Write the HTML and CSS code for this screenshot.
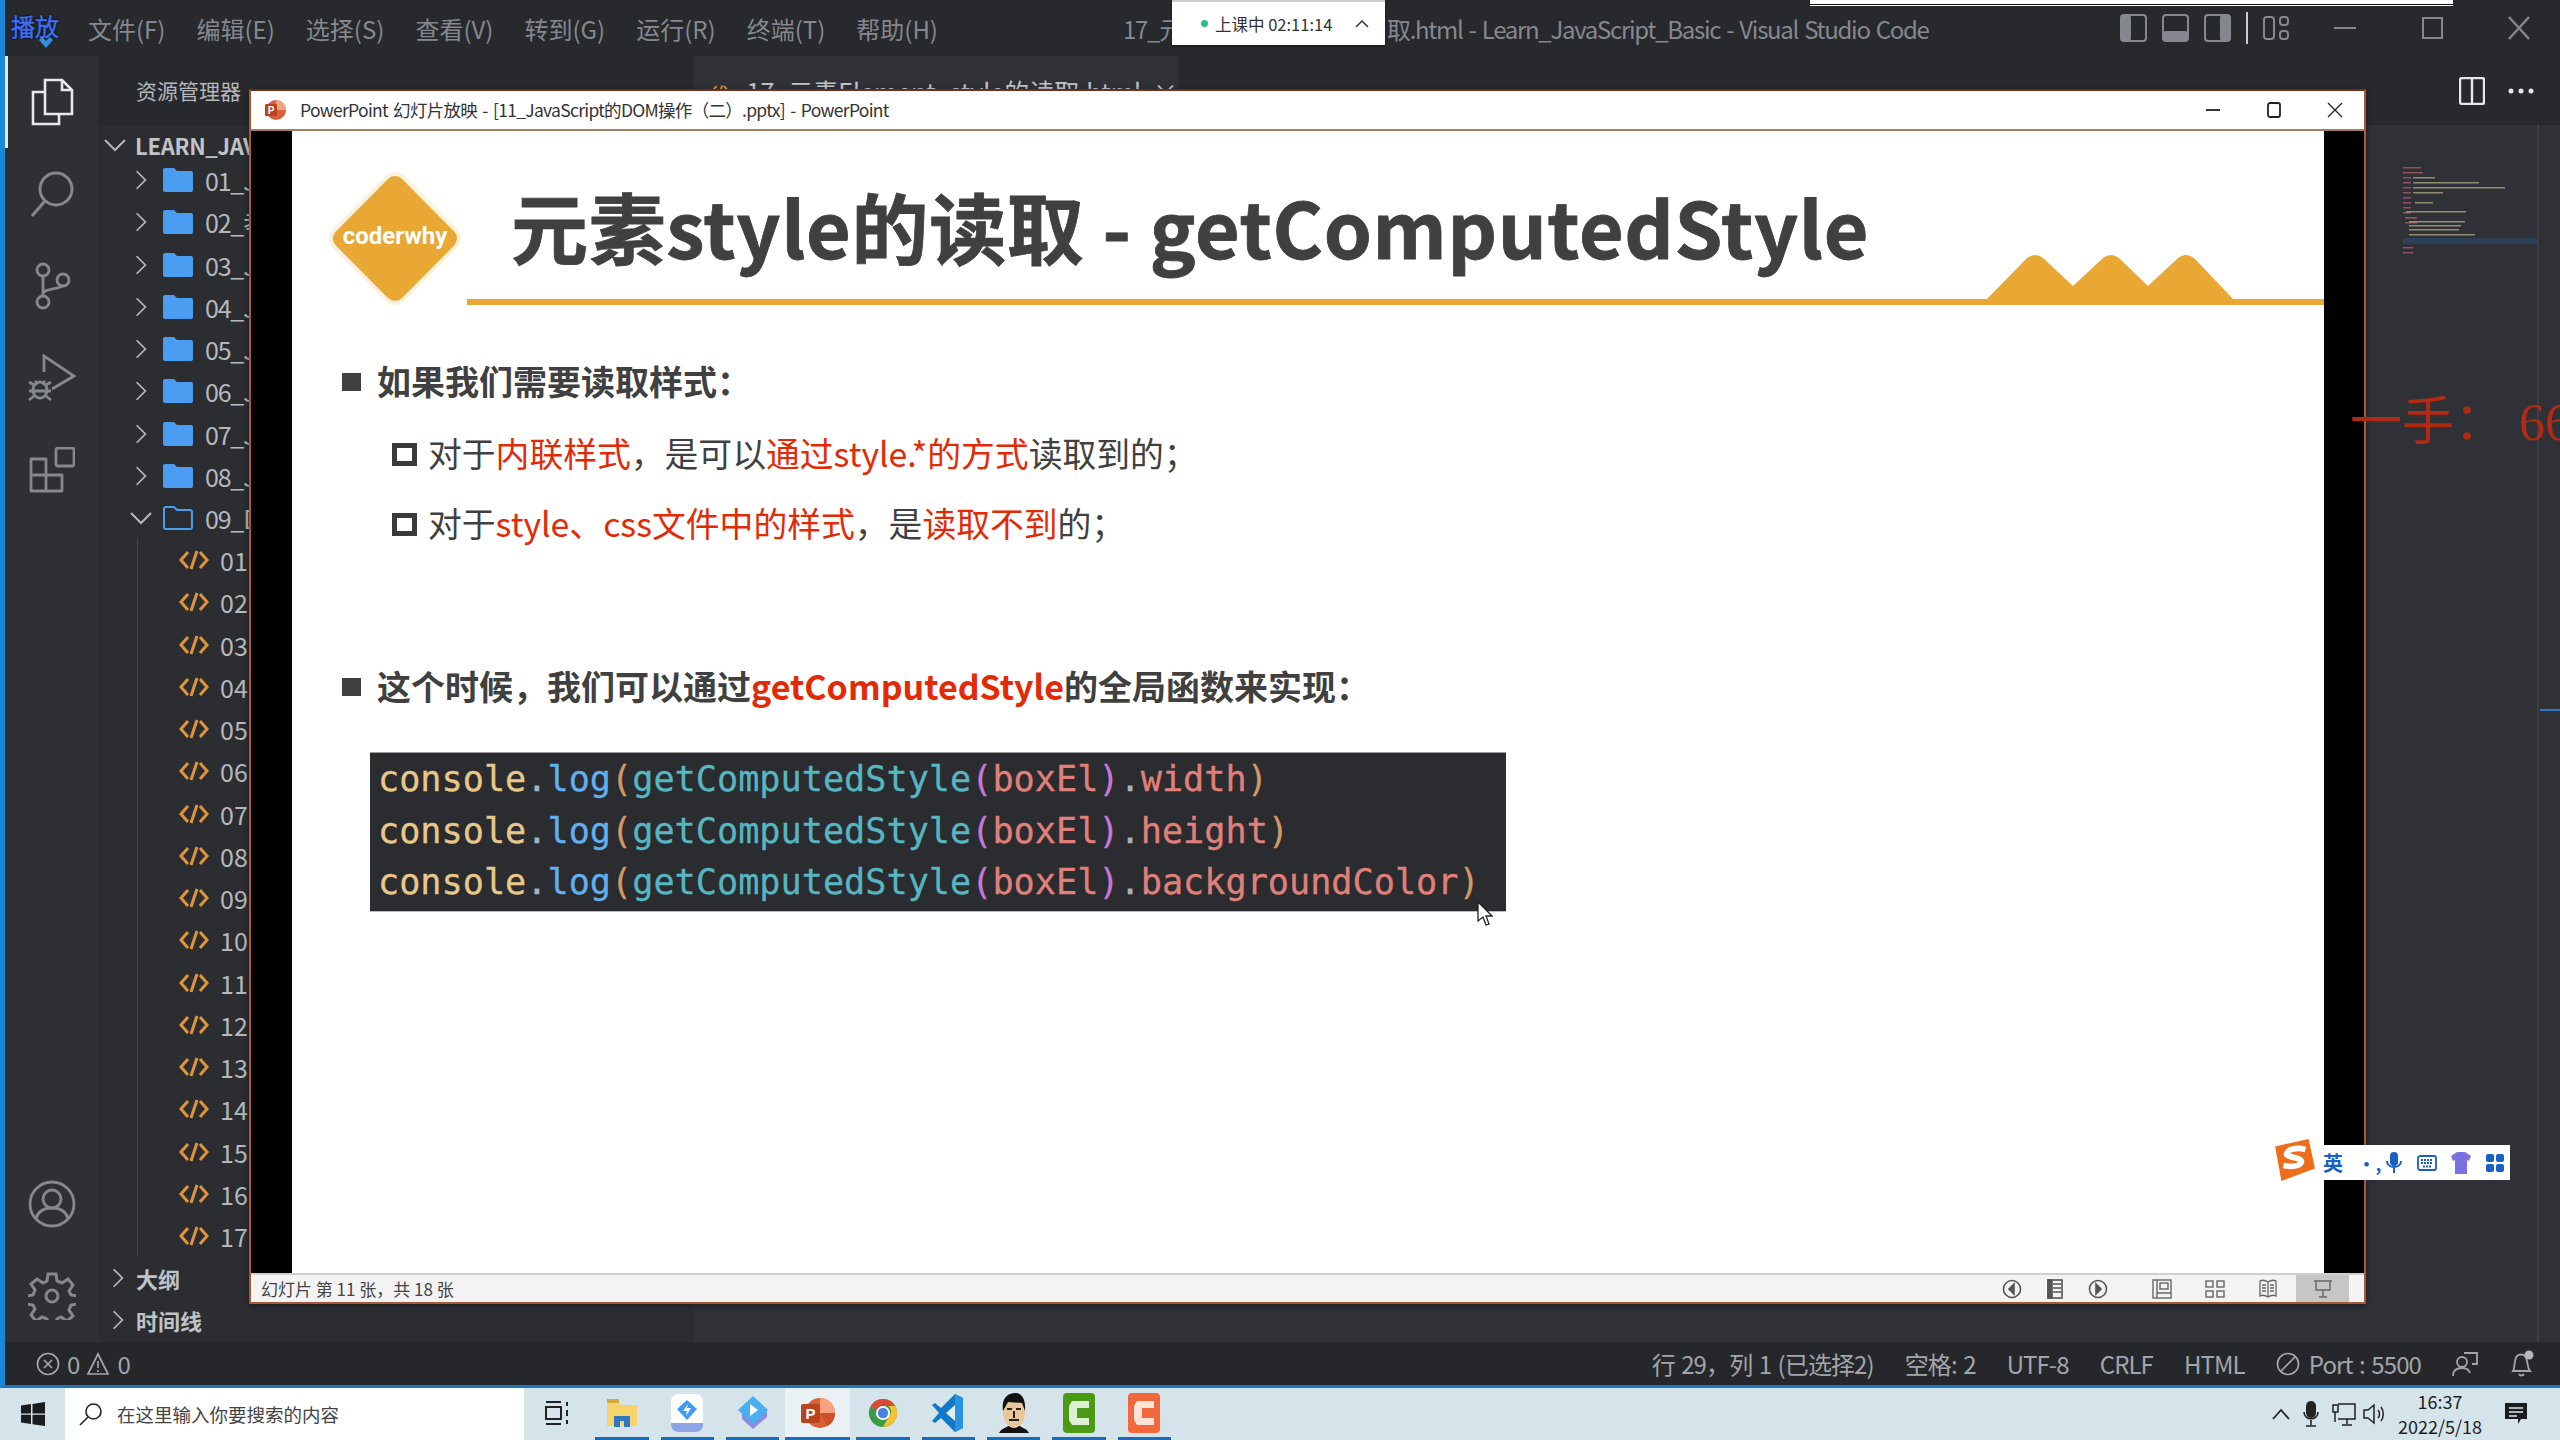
FILE: index.html
```html
<!DOCTYPE html>
<html lang="en">
<head>
  <meta charset="UTF-8" />
  <title>17_元素Element.style的读取.html - Learn_JavaScript_Basic - Visual Studio Code</title>
  <link rel="stylesheet" href="styles.css">
</head>
<body>
  <!-- shared icons -->
  <svg class="defs" width="0" height="0">
    <symbol id="chev-r" viewBox="0 0 16 24"><path d="M3 2l10 10L3 22" fill="none" stroke="currentColor" stroke-width="2"/></symbol>
    <symbol id="chev-d" viewBox="0 0 24 16"><path d="M2 3l10 10L22 3" fill="none" stroke="currentColor" stroke-width="2"/></symbol>
    <symbol id="folder" viewBox="0 0 32 26"><path d="M1 3a2 2 0 0 1 2-2h9l3 3h14a2 2 0 0 1 2 2v17a2 2 0 0 1-2 2H3a2 2 0 0 1-2-2z" fill="#4a9df0"/></symbol>
    <symbol id="folder-open" viewBox="0 0 32 26"><path d="M2 4a2 2 0 0 1 2-2h8l3 3h13a2 2 0 0 1 2 2v15a2 2 0 0 1-2 2H4a2 2 0 0 1-2-2z" fill="none" stroke="#4a9df0" stroke-width="2"/></symbol>
    <symbol id="html" viewBox="0 0 30 22"><path d="M9 3L2 11l7 8M21 3l7 8-7 8M18 2l-6 18" fill="none" stroke="#e0953a" stroke-width="3"/></symbol>
  </svg>

  <div class="desktop">
    <div class="vscode">
      <header class="titlebar">
        <span class="brand">播放<svg width="16" height="14" viewBox="0 0 16 14"><path d="M1 4l7 8 7-8-3-3-4 4-4-4z" fill="#2f8fe0"/></svg></span>
        <nav class="menu">
          <span>文件(F)</span><span>编辑(E)</span><span>选择(S)</span><span>查看(V)</span><span>转到(G)</span><span>运行(R)</span><span>终端(T)</span><span>帮助(H)</span>
        </nav>
        <div class="win-title"><span class="wt-a">17_元</span><span>取.html - Learn_JavaScript_Basic - Visual Studio Code</span></div>
        <div class="layout-btns">
          <svg width="27" height="28" viewBox="0 0 27 28"><rect x="1" y="1" width="25" height="26" rx="3" fill="none" stroke="#85888e" stroke-width="2"/><rect x="1" y="1" width="10" height="26" rx="3" fill="#85888e"/></svg>
          <svg width="27" height="28" viewBox="0 0 27 28"><rect x="1" y="1" width="25" height="26" rx="3" fill="none" stroke="#85888e" stroke-width="2"/><rect x="1" y="17" width="25" height="10" rx="3" fill="#85888e"/></svg>
          <svg width="27" height="28" viewBox="0 0 27 28"><rect x="1" y="1" width="25" height="26" rx="3" fill="none" stroke="#85888e" stroke-width="2"/><rect x="16" y="1" width="10" height="26" rx="3" fill="#85888e"/></svg>
          <span class="sep"></span>
          <svg width="26" height="24" viewBox="0 0 26 24"><rect x="1" y="1" width="10" height="22" rx="3" fill="none" stroke="#85888e" stroke-width="2"/><rect x="17" y="1" width="8" height="8" rx="3" fill="none" stroke="#85888e" stroke-width="2"/><rect x="17" y="15" width="8" height="8" rx="3" fill="none" stroke="#85888e" stroke-width="2"/></svg>
        </div>
        <div class="win-btns">
          <svg width="30" height="30" viewBox="0 0 30 30"><path d="M4 15h22" stroke="#85888e" stroke-width="2"/></svg>
          <svg width="30" height="30" viewBox="0 0 30 30"><rect x="6" y="5" width="19" height="20" fill="none" stroke="#85888e" stroke-width="2"/></svg>
          <svg width="30" height="30" viewBox="0 0 30 30"><path d="M5 4l20 22M25 4L5 26" stroke="#85888e" stroke-width="2.4"/></svg>
        </div>
      </header>

      <div class="workbench">
        <aside class="activity">
          <div class="act act-on">
            <svg width="44" height="48" viewBox="0 0 44 48" fill="none" stroke="#e6e8ea" stroke-width="2.6"><path d="M15 2h17l10 10v24H15z"/><path d="M32 2v10h10"/><path d="M15 14H3v32h26V36"/></svg>
          </div>
          <div class="act">
            <svg width="46" height="48" viewBox="0 0 46 48" fill="none" stroke="#85888e" stroke-width="3"><circle cx="27" cy="19" r="16"/><path d="M16 31L3 46"/></svg>
          </div>
          <div class="act">
            <svg width="38" height="48" viewBox="0 0 38 48" fill="none" stroke="#85888e" stroke-width="2.8"><circle cx="10" cy="8" r="6"/><circle cx="10" cy="40" r="6"/><circle cx="30" cy="18" r="6"/><path d="M10 14v20M10 32c0-6 18-4 20-9"/></svg>
          </div>
          <div class="act">
            <svg width="48" height="48" viewBox="0 0 48 48" fill="none" stroke="#85888e" stroke-width="2.8"><path d="M16 18V2l30 20-22 13"/><ellipse cx="12" cy="36" rx="7" ry="8"/><path d="M1 28l5 3M1 46l5-4M23 28l-5 3M23 46l-5-4M1 37h22M7 27l3 3M17 27l-3 3"/></svg>
          </div>
          <div class="act">
            <svg width="46" height="46" viewBox="0 0 46 46" fill="none" stroke="#85888e" stroke-width="2.8"><path d="M2 12h15v16H2zM2 28h15v16H2zM17 28h16v16H17z" stroke-linejoin="round"/><rect x="27" y="1" width="18" height="18" rx="2"/></svg>
          </div>
          <div class="act act-bottom">
            <svg width="48" height="48" viewBox="0 0 48 48" fill="none" stroke="#85888e" stroke-width="2.8"><circle cx="24" cy="24" r="22"/><circle cx="24" cy="19" r="9"/><path d="M8 39c2-9 9-11 16-11s14 2 16 11"/></svg>
          </div>
          <div class="act">
            <svg width="48" height="48" viewBox="0 0 48 48" fill="none" stroke="#85888e" stroke-width="3"><circle cx="24" cy="24" r="6"/><path d="M20 2h8l1 7 5 2 6-4 5 6-4 6 2 4 7 1v8l-7 1-2 5 4 6-6 5-6-4-4 2-1 7h-8l-1-7-5-2-6 4-5-6 4-6-2-4-7-1v-8l7-1 2-5-4-6 6-5 6 4 4-2z"/></svg>
          </div>
        </aside>

        <aside class="sidebar">
          <div class="side-title">资源管理器</div>
          <div class="side-head"><svg class="tw-d" width="24" height="16"><use href="#chev-d"/></svg><b>LEARN_JAV</b></div>
          <div class="tree">
            <div class="row"><svg class="tw" width="14" height="24"><use href="#chev-r"/></svg><svg class="fi" width="32" height="26"><use href="#folder"/></svg><span>01_J</span></div>
            <div class="row"><svg class="tw" width="14" height="24"><use href="#chev-r"/></svg><svg class="fi" width="32" height="26"><use href="#folder"/></svg><span>02_孝</span></div>
            <div class="row"><svg class="tw" width="14" height="24"><use href="#chev-r"/></svg><svg class="fi" width="32" height="26"><use href="#folder"/></svg><span>03_J</span></div>
            <div class="row"><svg class="tw" width="14" height="24"><use href="#chev-r"/></svg><svg class="fi" width="32" height="26"><use href="#folder"/></svg><span>04_J</span></div>
            <div class="row"><svg class="tw" width="14" height="24"><use href="#chev-r"/></svg><svg class="fi" width="32" height="26"><use href="#folder"/></svg><span>05_J</span></div>
            <div class="row"><svg class="tw" width="14" height="24"><use href="#chev-r"/></svg><svg class="fi" width="32" height="26"><use href="#folder"/></svg><span>06_J</span></div>
            <div class="row"><svg class="tw" width="14" height="24"><use href="#chev-r"/></svg><svg class="fi" width="32" height="26"><use href="#folder"/></svg><span>07_J</span></div>
            <div class="row"><svg class="tw" width="14" height="24"><use href="#chev-r"/></svg><svg class="fi" width="32" height="26"><use href="#folder"/></svg><span>08_J</span></div>
            <div class="row"><svg class="tw tw-open" width="24" height="16"><use href="#chev-d"/></svg><svg class="fi" width="32" height="26"><use href="#folder-open"/></svg><span>09_D</span></div>
            <div class="row file"><svg class="hi" width="30" height="22"><use href="#html"/></svg><span>01</span></div>
            <div class="row file"><svg class="hi" width="30" height="22"><use href="#html"/></svg><span>02</span></div>
            <div class="row file"><svg class="hi" width="30" height="22"><use href="#html"/></svg><span>03</span></div>
            <div class="row file"><svg class="hi" width="30" height="22"><use href="#html"/></svg><span>04</span></div>
            <div class="row file"><svg class="hi" width="30" height="22"><use href="#html"/></svg><span>05</span></div>
            <div class="row file"><svg class="hi" width="30" height="22"><use href="#html"/></svg><span>06</span></div>
            <div class="row file"><svg class="hi" width="30" height="22"><use href="#html"/></svg><span>07</span></div>
            <div class="row file"><svg class="hi" width="30" height="22"><use href="#html"/></svg><span>08</span></div>
            <div class="row file"><svg class="hi" width="30" height="22"><use href="#html"/></svg><span>09</span></div>
            <div class="row file"><svg class="hi" width="30" height="22"><use href="#html"/></svg><span>10</span></div>
            <div class="row file"><svg class="hi" width="30" height="22"><use href="#html"/></svg><span>11</span></div>
            <div class="row file"><svg class="hi" width="30" height="22"><use href="#html"/></svg><span>12</span></div>
            <div class="row file"><svg class="hi" width="30" height="22"><use href="#html"/></svg><span>13</span></div>
            <div class="row file"><svg class="hi" width="30" height="22"><use href="#html"/></svg><span>14</span></div>
            <div class="row file"><svg class="hi" width="30" height="22"><use href="#html"/></svg><span>15</span></div>
            <div class="row file"><svg class="hi" width="30" height="22"><use href="#html"/></svg><span>16</span></div>
            <div class="row file row-on"><svg class="hi" width="30" height="22"><use href="#html"/></svg><span>17</span></div>
          </div>
          <div class="side-foot"><svg width="14" height="24"><use href="#chev-r"/></svg><b>大纲</b></div>
          <div class="side-foot"><svg width="14" height="24"><use href="#chev-r"/></svg><b>时间线</b></div>
        </aside>

        <main class="editor">
          <div class="tabs">
            <div class="tab"><svg width="30" height="22"><use href="#html"/></svg><span>17_元素Element_style的读取.html</span><i>×</i></div>
            <div class="tab-actions">
              <svg width="26" height="28" viewBox="0 0 26 28" fill="none" stroke="#e6e8ea" stroke-width="2.4"><rect x="1" y="1" width="24" height="26" rx="2"/><path d="M13 1v26"/></svg>
              <svg width="26" height="6" viewBox="0 0 26 6" fill="#e6e8ea"><circle cx="3" cy="3" r="2.5"/><circle cx="13" cy="3" r="2.5"/><circle cx="23" cy="3" r="2.5"/></svg>
            </div>
          </div>
          <div class="code-area">
            <svg class="minimap" width="157" height="1217" viewBox="0 0 157 1217">
              <rect x="0" y="113" width="134" height="6" fill="#2c4058"/>
              <g class="mm" fill="#b5636a">
                <rect x="0" y="42" width="18" height="1.5"/><rect x="0" y="47" width="20" height="1.5"/><rect x="0" y="52" width="8" height="1.5"/><rect x="0" y="57" width="8" height="1.5"/><rect x="0" y="62" width="8" height="1.5"/><rect x="0" y="67" width="8" height="1.5"/><rect x="0" y="72" width="8" height="1.5"/><rect x="0" y="77" width="8" height="1.5"/><rect x="0" y="82" width="8" height="1.5"/><rect x="0" y="87" width="8" height="1.5"/><rect x="2" y="92" width="12" height="1.5"/><rect x="2" y="97" width="12" height="1.5"/><rect x="0" y="122" width="10" height="1.5"/><rect x="0" y="127" width="10" height="1.5"/><rect x="3" y="92" width="10" height="1.5"/>
              </g>
              <g class="mm" fill="#b7b48a">
                <rect x="10" y="52" width="22" height="1.5"/><rect x="10" y="57" width="66" height="1.5"/><rect x="10" y="62" width="92" height="1.5"/><rect x="10" y="67" width="30" height="1.5"/><rect x="12" y="77" width="18" height="1.5"/><rect x="3" y="86" width="60" height="1.5"/><rect x="6" y="96" width="56" height="1.5"/><rect x="6" y="100" width="52" height="1.5"/><rect x="6" y="104" width="50" height="1.5"/><rect x="6" y="109" width="66" height="1.5"/>
              </g>
              <rect x="134" y="0" width="2" height="1217" fill="#3d3f44"/>
              <rect x="137" y="584" width="20" height="2" fill="#2b78c5"/>
            </svg>
          </div>
        </main>
      </div>

      <footer class="statusbar">
        <div class="st-left">
          <svg width="24" height="24" viewBox="0 0 24 24" fill="none" stroke="#a2a5a9" stroke-width="1.7"><circle cx="12" cy="12" r="10.5"/><path d="M8 8l8 8M16 8l-8 8"/></svg><span>0</span>
          <svg class="warn" width="24" height="24" viewBox="0 0 24 24" fill="none" stroke="#a2a5a9" stroke-width="1.7"><path d="M12 2l10 20H2zM12 9v7M12 18v2"/></svg><span>0</span>
        </div>
        <div class="st-right">
          <span>行 29，列 1 (已选择2)</span>
          <span>空格: 2</span>
          <span>UTF-8</span>
          <span>CRLF</span>
          <span>HTML</span>
          <span class="port"><svg width="24" height="24" viewBox="0 0 24 24" fill="none" stroke="#a2a5a9" stroke-width="1.7"><circle cx="12" cy="12" r="10.5"/><path d="M5 19L19 5"/></svg>Port : 5500</span>
          <svg width="26" height="26" viewBox="0 0 26 26" fill="none" stroke="#a2a5a9" stroke-width="1.8"><circle cx="10" cy="11" r="5"/><path d="M1 25c0-6 4-8 9-8s7 2 8 5M12 2h13v11h-5"/></svg>
          <svg width="26" height="28" viewBox="0 0 26 28" fill="none" stroke="#a2a5a9" stroke-width="1.8"><path d="M4 21c2-3 1-12 4-15 2-2 6-2 8 0 3 3 2 12 5 15zM10 24c1 2 4 2 5 0"/><circle cx="20" cy="5" r="4.5" fill="#b4b7bb" stroke="none"/></svg>
        </div>
      </footer>
    </div>

    <footer class="taskbar">
      <div class="start">
        <svg width="24" height="24" viewBox="0 0 24 24" fill="#1a1c20"><path d="M0 3.5l10-1.4v9.300H0zM11.500 1.900L24 0v11.400H11.500zM0 12.800h10v9.200L0 20.600zM11.500 12.800H24V24l-12.500-1.800z"/></svg>
      </div>
      <div class="search">
        <svg width="24" height="24" viewBox="0 0 24 24" fill="none" stroke="#222" stroke-width="1.6"><circle cx="14.5" cy="9.5" r="7.5"/><path d="M9 15l-8 8"/></svg>
        <span>在这里输入你要搜索的内容</span>
      </div>
      <div class="app app-plain">
        <svg width="24" height="26" viewBox="0 0 24 26" fill="none" stroke="#222" stroke-width="2"><path d="M1 2h15M1 24h15"/><rect x="1" y="7" width="15" height="12"/><path d="M22 2v4M22 10v6M22 20v4"/></svg>
      </div>
      <div class="app">
        <svg width="32" height="30" viewBox="0 0 32 30"><path d="M1 4h11l3 3h16v21H1z" fill="#f6d36b"/><rect x="1" y="1" width="12" height="4" fill="#d3a93c"/><path d="M8 29V18h16v11h-6v-6h-4v6z" fill="#2e78c2"/></svg>
      </div>
      <div class="app">
        <svg width="34" height="40" viewBox="0 0 34 40"><rect x="1" y="1" width="32" height="38" rx="7" fill="#fff"/><path d="M17 7l10 9-10 11L7 16z" fill="#3f9bf0"/><path d="M18 11l-5 7h4l-1 5 5-8h-4z" fill="#fff"/><path d="M1 30h32v2a7 7 0 0 1-7 7H8a7 7 0 0 1-7-7z" fill="#8fa3e8"/></svg>
      </div>
      <div class="app">
        <svg width="32" height="36" viewBox="0 0 32 36"><path d="M16 26l14-10v6L16 34 5 24v-6z" fill="#8a8ae0"/><path d="M16 1l15 14-15 14L1 15z" fill="#4aaef2"/><path d="M13 9l8 6-8 6z" fill="#fff"/></svg>
      </div>
      <div class="app app-on">
        <svg width="34" height="36" viewBox="0 0 34 36"><circle cx="19" cy="18" r="15" fill="#d9613a"/><path d="M19 3a15 15 0 0 1 15 15H19z" fill="#f4a27f"/><path d="M19 18h15a15 15 0 0 1-7.500 13z" fill="#c9502a"/><rect x="0" y="9" width="19" height="19" rx="2" fill="#b8431f"/><text class="p-mark" x="9.5" y="24" text-anchor="middle">P</text></svg>
      </div>
      <div class="app">
        <svg width="30" height="32" viewBox="0 0 32 32"><circle cx="16" cy="16" r="15" fill="#3d9a44"/><path d="M16 1a15 15 0 0 1 13 7.500H16a7.500 7.500 0 0 0-7 5L3 8.500A15 15 0 0 1 16 1z" fill="#d94a36"/><path d="M29 8.500A15 15 0 0 1 16 31l6-11a7.500 7.500 0 0 0 0-11.500z" fill="#f2c230"/><circle cx="16" cy="16" r="7.500" fill="#fff"/><circle cx="16" cy="16" r="5.5" fill="#4a80e6"/></svg>
      </div>
      <div class="app">
        <svg width="32" height="40" viewBox="0 0 32 40"><path d="M23 1l8 4v30l-8 4L9 25l-6 5-3-2 7-8-7-8 3-2 6 5z" fill="#1078c8"/><path d="M23 1l8 4v30l-8 4z" fill="#2a94de"/><path d="M23 12l-9 8 9 8z" fill="#e3edf3"/></svg>
      </div>
      <div class="app">
        <svg width="30" height="40" viewBox="0 0 30 40"><path d="M0 40c3-5 7-5 9-7h12c2 2 6 2 9 7z" fill="#111"/><ellipse cx="15" cy="19" rx="11" ry="16" fill="#e9c79a"/><path d="M4 18C2 4 10 0 16 0s11 5 10 18l-3-8-14-1z" fill="#111"/><path d="M8 16h5M17 16h5M15 18v7M10 27h10" stroke="#222" stroke-width="2" fill="none"/></svg>
      </div>
      <div class="app">
        <svg width="32" height="40" viewBox="0 0 32 40"><rect width="32" height="40" rx="4" fill="#4a9a14"/><path d="M26 8H9l-3 5v14l3 5h17v-7H14V15h12z" fill="#dcefd2"/></svg>
      </div>
      <div class="app">
        <svg width="32" height="40" viewBox="0 0 32 40"><rect width="32" height="40" rx="4" fill="#f1683c"/><path d="M26 8H9l-3 5v14l3 5h17v-7H14V15h12z" fill="#fde3d8"/></svg>
      </div>
      <div class="tray">
        <svg width="18" height="12" viewBox="0 0 18 12" fill="none" stroke="#222" stroke-width="1.8"><path d="M1 11l8-9 8 9"/></svg>
        <svg width="16" height="26" viewBox="0 0 16 26"><rect x="3" y="0" width="10" height="17" rx="5" fill="#222"/><path d="M1 11c0 9 14 9 14 0M8 19v5M3 25h10" fill="none" stroke="#222" stroke-width="1.6"/></svg>
        <svg width="24" height="24" viewBox="0 0 24 24" fill="none" stroke="#222" stroke-width="1.5"><path d="M6 2h17v15H6M15 17v5M10 23h10"/><rect x="1" y="3" width="5" height="7"/><path d="M3 10v10"/></svg>
        <svg class="vol" width="24" height="22" viewBox="0 0 24 22" fill="none" stroke="#222" stroke-width="1.5"><path d="M1 7h4l6-5v18l-6-5H1zM15 7c2 2 2 6 0 8M18 4c3 4 3 10 0 14"/></svg>
        <div class="clock"><span>16:37</span><span>2022/5/18</span></div>
        <svg class="notify" width="22" height="22" viewBox="0 0 22 22"><path d="M0 0h22v16h-6l-3 5v-5H0z" fill="#1a1c20"/><path d="M4 5h14M4 9h14M4 13h8" stroke="#dfe7ed" stroke-width="1.5"/></svg>
      </div>
    </footer>

    <!-- strip of another window peeking in at the top edge -->
    <div class="top-strip"></div>

    <!-- class timer -->
    <div class="timer">
      <i class="dot"></i><span>上课中 02:11:14</span>
      <svg width="14" height="9" viewBox="0 0 14 9" fill="none" stroke="#333" stroke-width="1.5"><path d="M1 8l6-6 6 6"/></svg>
    </div>

    <!-- PowerPoint slideshow window -->
    <section class="ppt">
      <div class="ppt-title">
        <svg width="22" height="22" viewBox="0 0 22 22"><circle cx="12" cy="11" r="10" fill="#d9613a"/><path d="M12 1a10 10 0 0 1 10 10H12z" fill="#f4a27f"/><rect x="1" y="5" width="12" height="12" rx="1" fill="#b8431f"/><text class="p-mark-sm" x="7" y="15" text-anchor="middle">P</text></svg>
        <span class="ppt-name">PowerPoint 幻灯片放映 - [11_JavaScript的DOM操作（二）.pptx] - PowerPoint</span>
        <div class="ppt-btns">
          <svg width="16" height="16" viewBox="0 0 16 16"><path d="M1 8h14" stroke="#222" stroke-width="1.8"/></svg>
          <svg width="16" height="16" viewBox="0 0 16 16"><rect x="2" y="1" width="12" height="14" rx="2" fill="none" stroke="#222" stroke-width="1.8"/></svg>
          <svg width="16" height="16" viewBox="0 0 16 16"><path d="M1 1l14 14M15 1L1 15" stroke="#222" stroke-width="1.3"/></svg>
        </div>
      </div>
      <div class="ppt-show">
        <div class="slide">
          <div class="slide-head">
            <div class="logo">
              <svg width="132" height="133" viewBox="0 0 132 133"><path d="M66 14L118 66.500 66 119 14 66.500z" fill="#fbf1df" stroke="#fbf1df" stroke-width="28" stroke-linejoin="round"/><path d="M66 14L118 66.500 66 119 14 66.500z" fill="#e8a833" stroke="#e8a833" stroke-width="20" stroke-linejoin="round"/></svg>
              <span>coderwhy</span>
            </div>
            <div class="head-rule">
              <h1>元素style的读取 - getComputedStyle</h1>
              <svg width="246" height="44" viewBox="0 0 246 44"><path d="M0 44L40 3q8-6 16 0L86 31 116 3q8-6 16 0l29 28 30-28q8-6 16 0L246 44z" fill="#e8a833"/></svg>
            </div>
          </div>
          <div class="slide-body">
            <p class="lv1"><i></i><span>如果我们需要读取样式：</span></p>
            <p class="lv2"><i></i><span>对于<em>内联样式</em>，是可以<em>通过style.*的方式</em>读取到的；</span></p>
            <p class="lv2 lv2-b"><i></i><span>对于<em>style、css文件中的样式</em>，是<em>读取不到</em>的；</span></p>
            <p class="lv1 lv1-b"><i></i><span>这个时候，我们可以通过<em>getComputedStyle</em>的全局函数来实现：</span></p>
            <pre class="code"><span class="c-obj">console</span><span class="c-dot">.</span><span class="c-fn">log</span><span class="c-p1">(</span><span class="c-call">getComputedStyle</span><span class="c-p2">(</span><span class="c-var">boxEl</span><span class="c-p2">)</span><span class="c-dot">.</span><span class="c-var">width</span><span class="c-p1">)</span>
<span class="c-obj">console</span><span class="c-dot">.</span><span class="c-fn">log</span><span class="c-p1">(</span><span class="c-call">getComputedStyle</span><span class="c-p2">(</span><span class="c-var">boxEl</span><span class="c-p2">)</span><span class="c-dot">.</span><span class="c-var">height</span><span class="c-p1">)</span>
<span class="c-obj">console</span><span class="c-dot">.</span><span class="c-fn">log</span><span class="c-p1">(</span><span class="c-call">getComputedStyle</span><span class="c-p2">(</span><span class="c-var">boxEl</span><span class="c-p2">)</span><span class="c-dot">.</span><span class="c-var">backgroundColor</span><span class="c-p1">)</span></pre>
          </div>
        </div>
      </div>
      <div class="ppt-status">
        <span>幻灯片 第 11 张，共 18 张</span>
        <div class="ppt-tools">
          <svg width="20" height="20" viewBox="0 0 20 20" fill="none" stroke="#555" stroke-width="1.6"><circle cx="10" cy="10" r="8.5"/><path d="M12 5l-5 5 5 5z" fill="#555"/></svg>
          <svg width="16" height="20" viewBox="0 0 16 20" fill="none" stroke="#555" stroke-width="1.6"><rect x="1" y="1" width="14" height="18"/><path d="M6 5h8M6 9h8M6 13h8"/><rect x="1" y="1" width="4" height="18" fill="#555"/></svg>
          <svg width="20" height="20" viewBox="0 0 20 20" fill="none" stroke="#555" stroke-width="1.6"><circle cx="10" cy="10" r="8.5"/><path d="M8 5l5 5-5 5z" fill="#555"/></svg>
          <svg class="gap-l" width="20" height="20" viewBox="0 0 20 20" fill="none" stroke="#666" stroke-width="1.4"><rect x="1" y="1" width="18" height="18"/><path d="M5 1v18M5 14h14"/><rect x="8" y="4" width="8" height="6"/></svg>
          <svg class="gap-m" width="20" height="20" viewBox="0 0 20 20" fill="none" stroke="#666" stroke-width="1.4"><rect x="1" y="2" width="7" height="6"/><rect x="12" y="2" width="7" height="6"/><rect x="1" y="12" width="7" height="6"/><rect x="12" y="12" width="7" height="6"/></svg>
          <svg class="gap-m" width="20" height="20" viewBox="0 0 20 20" fill="none" stroke="#666" stroke-width="1.3"><path d="M10 3C7 1 4 1 2 2v15c2-1 5-1 8 1 3-2 6-2 8-1V2c-2-1-5-1-8 1zM10 3v15M4 6h4M4 9h4M4 12h4M12 6h4M12 9h4M12 12h4"/></svg>
          <div class="tool-on"><svg width="20" height="20" viewBox="0 0 20 20" fill="none" stroke="#666" stroke-width="1.4"><path d="M1 2h18M3 2v9h14V2M10 11v6M6 18h8"/></svg></div>
        </div>
      </div>
    </section>

    <!-- hand-written note on the screen -->
    <div class="note">一手： 66</div>

    <!-- sogou input method bar -->
    <div class="sogou">
      <svg class="sogou-s" width="44" height="44" viewBox="0 0 42 42"><path d="M3 8l32-7 6 28-32 12z" fill="#ee6c1b"/><path d="M32 11c-7-2-17-1-18 4-1 4 15 3 14 8-1 4-10 5-17 3" fill="none" stroke="#fff" stroke-width="5.5"/></svg>
      <span class="sg-text">英</span>
      <span class="sg-punct">•,</span>
      <svg width="16" height="22" viewBox="0 0 16 22"><rect x="4" y="0" width="8" height="14" rx="4" fill="#1a5fc4"/><path d="M1 9c0 8 14 8 14 0M8 16v5" fill="none" stroke="#1a5fc4" stroke-width="2"/></svg>
      <svg width="20" height="16" viewBox="0 0 20 16"><rect x="1" y="1" width="18" height="14" rx="2" fill="none" stroke="#1a5fc4" stroke-width="1.8"/><path d="M4 5h12M4 8h12M6 11.500h8" stroke="#1a5fc4" stroke-width="1.8" stroke-dasharray="2 1"/></svg>
      <svg width="20" height="22" viewBox="0 0 20 22"><path d="M6 0h8l6 4-2 5-2-1v14H4V8L2 9 0 4z" fill="#7a70e0"/></svg>
      <svg width="18" height="18" viewBox="0 0 18 18" fill="#1a5fc4"><rect width="8" height="8" rx="2"/><rect x="10" width="8" height="8" rx="2"/><rect y="10" width="8" height="8" rx="2"/><rect x="10" y="10" width="8" height="8" rx="2"/></svg>
    </div>

    <svg class="cursor" width="16" height="25" viewBox="0 0 16 25"><path d="M1 1v19l5-4 3 8 3-1-3-8h6z" fill="#fff" stroke="#222" stroke-width="1.3"/></svg>
  </div>
</body>
</html>
```

FILE: styles.css
```css
* {
  box-sizing: border-box;
}
html, body {
  margin: 0;
  padding: 0;
}
body {
  font-family: "Noto Sans CJK SC", "Noto Sans", sans-serif;
  background: #27292c;
  color: #a2a5a9;
}
.defs {
  position: absolute;
}
.desktop {
  position: relative;
  width: 2560px;
  height: 1440px;
  overflow: hidden;
  display: flex;
  flex-direction: column;
}

/* VS Code window */
.vscode {
  height: 1388px;
  display: flex;
  flex-direction: column;
  border-left: 5px solid #1c86d8;
  border-bottom: 3px solid #1677c4;
  background: #27292c;
}
.titlebar {
  height: 56px;
  display: flex;
  align-items: center;
  flex: none;
  font-size: 24px;
  color: #85888e;
}
.brand {
  position: relative;
  width: 83px;
  padding-left: 6px;
  font-family: "Liberation Serif", "Noto Sans CJK SC", serif;
  font-size: 24px;
  color: #3f6ff0;
  -webkit-text-stroke: 0.5px #3f6ff0;
  text-shadow: 0 0 2px #000, 0 0 2px #000;
  margin-bottom: 6px;
}
.brand svg {
  position: absolute;
  left: 33px;
  top: 28px;
}
.menu {
  width: 1035px;
  display: flex;
  gap: 31px;
}
.win-title {
  flex: 1;
  display: flex;
  white-space: pre;
  overflow: hidden;
  font-size: 24px;
  word-spacing: 2px;
  letter-spacing: -1.3px;
}
.wt-a {
  width: 264px;
  flex: none;
}
.layout-btns {
  display: flex;
  align-items: center;
  gap: 15px;
  margin-right: 41px;
}
.layout-btns .sep {
  width: 2px;
  height: 32px;
  background: #c9cbcf;
}
.win-btns {
  display: flex;
  gap: 57px;
  padding-right: 26px;
}
.workbench {
  flex: 1;
  display: flex;
  min-height: 0;
}
.activity {
  width: 93px;
  flex: none;
  display: flex;
  flex-direction: column;
  background: #2e3034;
}
.act {
  height: 92px;
  display: flex;
  align-items: center;
  justify-content: center;
  flex: none;
}
.act-on {
  border-left: 3px solid #e6e8ea;
  padding-right: 3px;
}
.act-bottom {
  margin-top: auto;
}
.sidebar {
  width: 596px;
  flex: none;
  display: flex;
  flex-direction: column;
  background: #2b2d31;
  font-size: 25px;
  color: #b5b8bc;
}
.side-title {
  height: 70px;
  flex: none;
  display: flex;
  align-items: center;
  padding: 0 0 3px 38px;
  font-size: 21px;
  background: #27292c;
}
.side-head {
  height: 33px;
  flex: none;
  display: flex;
  align-items: center;
  padding-top: 5px;
  font-size: 22px;
  color: #c0c3c7;
  overflow: hidden;
}
.side-head b {
  margin-left: 8px;
  width: 115px;
  overflow: hidden;
  letter-spacing: -0.3px;
}
.tw-d {
  margin-left: 5px;
  color: #b5b8bc;
}
.tree {
  flex: 1;
  min-height: 0;
  overflow: hidden;
}
.row {
  height: 42.24px;
  display: flex;
  align-items: center;
  white-space: nowrap;
}
.row .tw {
  margin-left: 36px;
  color: #b5b8bc;
}
.row .tw-open {
  margin-left: 31px;
}
.row .tw-open + .fi {
  margin-left: 9px;
}
.row .fi {
  margin-left: 14px;
}
.row span {
  margin-left: 11px;
  width: 44px;
  overflow: hidden;
  line-height: 36px;
  letter-spacing: -1.2px;
}
.row.file {
  background: linear-gradient(#44464b, #44464b) 39px 0 / 1px 100% no-repeat;
}
.row .hi {
  margin-left: 81px;
}
.row.file span {
  width: 30px;
  letter-spacing: 0;
}
.row-on {
  background-color: #3a3c42;
}
.side-foot {
  height: 42px;
  flex: none;
  display: flex;
  align-items: center;
  padding: 0 0 3px 13px;
  font-size: 22px;
}
.side-foot b {
  margin-left: 11px;
  color: #c0c3c7;
}
.editor {
  flex: 1;
  min-width: 0;
  display: flex;
  flex-direction: column;
}
.tabs {
  height: 69px;
  flex: none;
  display: flex;
  justify-content: space-between;
  align-items: center;
}
.tab {
  width: 484px;
  height: 69px;
  display: flex;
  align-items: center;
  padding-left: 17px;
  background: #2f3136;
  font-size: 25px;
  color: #c0c3c7;
  white-space: nowrap;
}
.tab span {
  margin-left: 17px;
}
.tab i {
  margin-left: 12px;
  font-style: normal;
}
.tab-actions {
  display: flex;
  align-items: center;
  gap: 23px;
  padding-right: 26px;
}
.code-area {
  flex: 1;
  min-height: 0;
  display: flex;
  justify-content: flex-end;
  background: #2f3136;
}
.minimap {
  display: block;
}
.mm {
  opacity: 0.7;
}
.statusbar {
  height: 43px;
  flex: none;
  display: flex;
  align-items: center;
  justify-content: space-between;
  font-size: 24px;
  letter-spacing: -0.9px;
  word-spacing: 2px;
  color: #a2a5a9;
  background: #25272a;
  padding: 0 25px 0 31px;
}
.st-left, .st-right, .port {
  display: flex;
  align-items: center;
}
.st-left {
  gap: 7px;
}
.st-right {
  gap: 31px;
}
.port {
  gap: 9px;
}

/* Windows taskbar */
.taskbar {
  flex: 1;
  display: flex;
  background: #d5e3ea;
  color: #222;
}
.start {
  width: 65px;
  display: flex;
  align-items: center;
  justify-content: center;
}
.search {
  width: 459px;
  display: flex;
  align-items: center;
  gap: 14px;
  padding-left: 14px;
  background: #fff;
  font-size: 18.5px;
  color: #444;
}
.app {
  width: 53.3px;
  margin: 0 6px;
  display: flex;
  align-items: center;
  justify-content: center;
  border-bottom: 3px solid #1a6bb8;
}
.app-plain {
  border-bottom-color: transparent;
}
.app-on {
  background: #e9f1f5;
  margin: 0;
  width: 65.3px;
}
.p-mark {
  font-family: "Liberation Sans", sans-serif;
  font-size: 15px;
  font-weight: 700;
  fill: #fff;
}
.tray {
  margin-left: auto;
  display: flex;
  align-items: center;
  gap: 13px;
  padding-right: 33px;
}
.tray .vol {
  margin-left: -6px;
}
.clock {
  width: 84px;
  margin-left: -2px;
  display: flex;
  flex-direction: column;
  align-items: center;
  font-size: 18px;
  line-height: 25px;
  color: #1d1f22;
  white-space: nowrap;
}
.notify {
  margin-left: 10px;
}

/* overlays */
.top-strip {
  position: absolute;
  left: 1810px;
  top: 0;
  width: 643px;
  height: 6px;
  background: #fff;
  box-shadow: inset 0 -2px 0 -1px #fff, inset 0 -3px 0 -1px #111;
}
.timer {
  position: absolute;
  left: 1172px;
  top: 0;
  width: 213px;
  height: 45px;
  display: flex;
  align-items: center;
  background: #fff;
  padding: 0 16px 0 29px;
  border-top: 2px solid #ccc;
  box-shadow: 0 1px 2px rgba(0,0,0,0.5);
  font-size: 16.5px;
  color: #333;
}
.timer span {
  margin-left: 7px;
  white-space: nowrap;
}
.timer svg {
  margin-left: auto;
}
.timer .dot {
  width: 7px;
  height: 7px;
  border-radius: 50%;
  background: #26c08a;
  flex: none;
}
.ppt {
  position: absolute;
  left: 249px;
  top: 89px;
  width: 2117px;
  height: 1215px;
  display: flex;
  flex-direction: column;
  background: #000;
  border: 2px solid #a8583a;
  border-top-color: #6e2e1a;
  box-shadow: 0 2px 6px rgba(0,0,0,0.4);
}
.ppt-title {
  height: 40px;
  flex: none;
  display: flex;
  align-items: center;
  padding-left: 13px;
  background: #fff;
  border-bottom: 2px solid #a0806c;
  font-size: 17.5px;
  color: #333;
}
.ppt-name {
  margin-left: 14px;
  white-space: nowrap;
  letter-spacing: -0.7px;
  word-spacing: 2px;
  padding-bottom: 2px;
}
.ppt-btns {
  margin-left: auto;
  display: flex;
  gap: 45px;
  padding-right: 21px;
}
.ppt-show {
  flex: 1;
  min-height: 0;
  display: flex;
  padding: 0 40px 0 41px;
}
.slide {
  flex: 1;
  background: #fff;
  display: flex;
  flex-direction: column;
  color: #404040;
}

/* slide header: logo and title over the orange rule */
.slide-head {
  display: grid;
  grid-template-columns: 175px 1fr;
  height: 173px;
}
.logo {
  display: flex;
  align-items: center;
  justify-content: center;
  position: relative;
  margin: 41px 6px 0 37px;
  width: 132px;
  height: 133px;
}
.logo svg {
  display: block;
}
.logo span {
  position: absolute;
  font-family: Roboto, sans-serif;
  font-weight: 700;
  font-size: 24px;
  color: #fff;
  margin-top: -6px;
}
.head-rule {
  display: flex;
  align-items: flex-end;
  justify-content: space-between;
  border-bottom: 6px solid #e8a833;
  padding-left: 44px;
  padding-right: 91px;
}
.head-rule h1 {
  margin: 0;
  align-self: flex-start;
  padding-top: 45px;
  font-size: 77px;
  line-height: 100px;
  font-weight: 700;
  letter-spacing: 0.65px;
  -webkit-text-stroke: 0.8px #404040;
  white-space: nowrap;
}
.head-rule svg {
  display: block;
}
.slide-body {
  padding-left: 50px;
}
.slide-body p {
  margin: 0;
  display: flex;
  align-items: center;
  height: 50px;
  white-space: nowrap;
  font-size: 34px;
}
.slide-body em {
  font-style: normal;
  color: #e32a06;
}
.slide-body .lv1 {
  margin-top: 51px;
  font-weight: 700;
}
.lv1 i {
  width: 19px;
  height: 18px;
  background: #404040;
  margin: 4px 16px 0 0;
  flex: none;
}
.slide-body .lv1-b {
  margin-top: 113px;
}
.slide-body .lv2 {
  margin-top: 22px;
  margin-left: 50px;
  font-size: 33.8px;
}
.slide-body .lv2-b {
  margin-top: 20px;
}
.lv2 i {
  width: 25px;
  height: 23px;
  border: 5px solid #3a3a3a;
  margin: 5px 11px 0 0;
  flex: none;
}
.code {
  margin: 42px 0 0 28px;
  width: 1136px;
  height: 160px;
  padding: 0 8px;
  background: #2a2c30;
  border-top: 1px solid #9a9a9a;
  border-bottom: 1px solid #bbb;
  font-family: "DejaVu Sans Mono", monospace;
  font-size: 35.2px;
  line-height: 51.7px;
  -webkit-text-stroke: 0.3px;
  overflow: hidden;
}
.c-obj { color: #e8c88a; }
.c-dot { color: #abb2bf; }
.c-fn { color: #61afef; }
.c-p1 { color: #d19a66; }
.c-call { color: #56b6c2; }
.c-p2 { color: #c678dd; }
.c-var { color: #e0807a; }
.ppt-status {
  height: 29px;
  flex: none;
  display: flex;
  align-items: center;
  background: #f3f3f3;
  border-top: 2px solid #cfcfcf;
  padding-left: 10px;
  font-size: 17px;
  color: #444;
}
.ppt-tools {
  margin-left: auto;
  display: flex;
  align-items: center;
  gap: 25px;
  height: 100%;
  padding-right: 15px;
}
.ppt-tools .gap-l {
  margin-left: 19px;
}
.ppt-tools .gap-m {
  margin-left: 8px;
}
.tool-on {
  width: 53px;
  height: 100%;
  display: flex;
  align-items: center;
  justify-content: center;
  background: #c6c6c6;
  margin-left: -7px;
}
.p-mark-sm {
  font-family: "Liberation Sans", sans-serif;
  font-size: 10px;
  font-weight: 700;
  fill: #fff;
}
.note {
  position: absolute;
  left: 2350px;
  top: 388px;
  font-family: "Liberation Serif", "Noto Sans CJK SC", serif;
  font-size: 52px;
  line-height: 70px;
  color: #b02a14;
  white-space: nowrap;
}
.sogou {
  position: absolute;
  left: 2272px;
  top: 1145px;
  width: 238px;
  height: 35px;
  display: flex;
  align-items: center;
  gap: 14.5px;
  padding-left: 51px;
  background: linear-gradient(#fff, #fff) 38px 0 / 200px 100% no-repeat;
  color: #1a5fc4;
}
.sogou-s {
  position: absolute;
  left: 0;
  top: -7px;
}
.sg-text {
  font-size: 20px;
  font-weight: 700;
}
.sg-punct {
  font-size: 18px;
  font-weight: 700;
  width: 14px;
  white-space: nowrap;
}
.cursor {
  position: absolute;
  left: 1477px;
  top: 901px;
}
```
